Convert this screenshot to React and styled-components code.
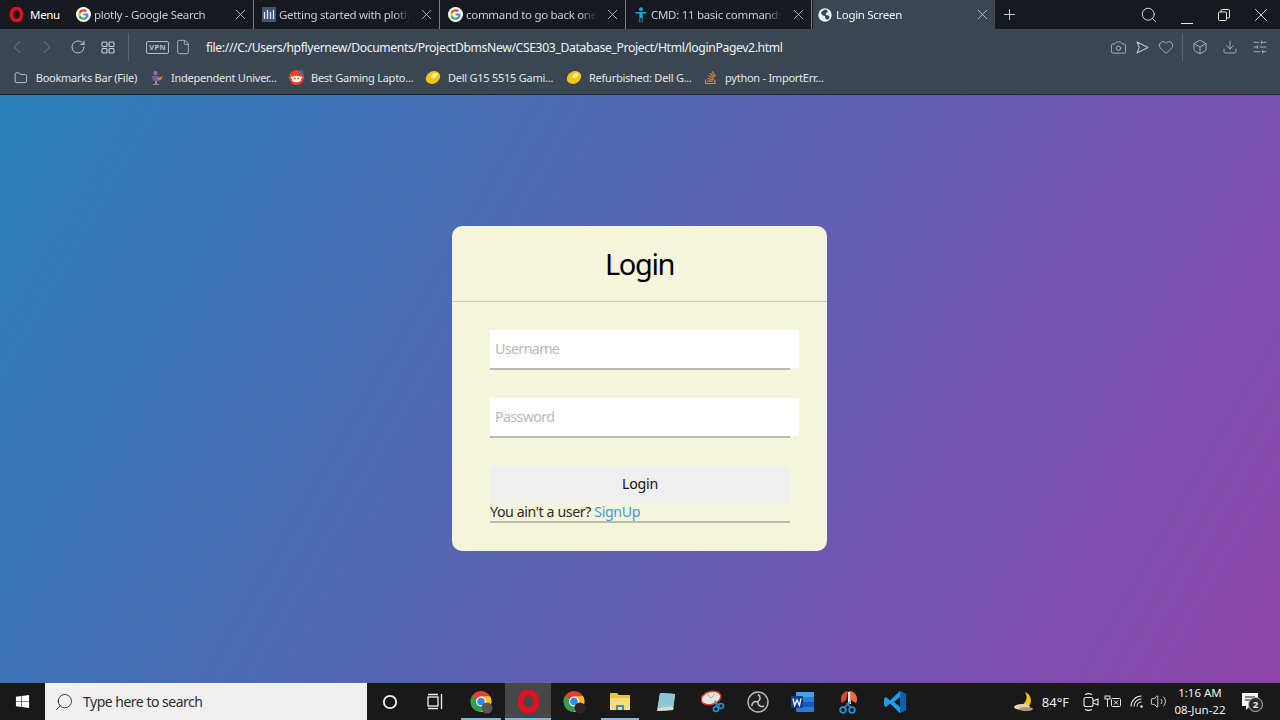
import React from 'react'
import styled, { createGlobalStyle } from 'styled-components'
import {
  ChevronLeft, ChevronRight, RotateCw, File, Folder, Camera, Heart, Box, Download,
  SlidersHorizontal, Search, X, Plus, Volume2,
} from 'lucide-react'
import { FaStackOverflow, FaWindows } from 'react-icons/fa'

const uiFont = `"Noto Sans", "Open Sans", "Liberation Sans", sans-serif`

const GlobalStyle = createGlobalStyle`
  html, body { margin: 0; padding: 0; height: 100%; overflow: hidden; }
  body { font-family: ${uiFont}; }
  #root { height: 100%; }
  * { box-sizing: border-box; }
`

const Screen = styled.div`
  width: 1280px;
  height: 720px;
  display: flex;
  flex-direction: column;
`

/* browser chrome */
const TabStrip = styled.div`
  height: 29px;
  background: #16191e;
  display: flex;
  align-items: stretch;
  color: #c8cdd2;
  font-size: 11.5px;
  letter-spacing: -0.3px;
`
const MenuButton = styled.div`
  width: 68px;
  display: flex;
  align-items: center;
  gap: 6px;
  padding-left: 9px;
  color: #fff;
`
const Tab = styled.div`
  width: ${p => (p.$active ? '182px' : '186px')};
  margin-left: ${p => (p.$active ? '1px' : '0')};
  display: flex;
  align-items: center;
  padding: 0 4px 0 ${p => (p.$active ? '5px' : '8px')};
  gap: ${p => (p.$active ? '4px' : '3px')};
  background: ${p => (p.$active ? '#3b4653' : 'transparent')};
  color: ${p => (p.$active ? '#f2f4f6' : '#c8cdd2')};
  border-right: ${p => (p.$sep ? '1px solid #7c8187' : '0')};
`
const TabTitle = styled.span`
  flex: 1;
  min-width: 0;
  white-space: nowrap;
  overflow: hidden;
  mask-image: linear-gradient(to right, #000 88%, transparent 100%);
`
const TabClose = styled(X)`
  flex: none;
  margin-left: 5px;
  color: #c4c8cc;
`
const StripRight = styled.div`
  flex: 1;
  display: flex;
  align-items: center;
  padding-left: 6px;
  color: #e6e8ea;
`
const WindowButtons = styled.div`
  margin-left: auto;
  display: flex;
  align-items: center;
`
const WinButton = styled.div`
  width: 37.4px;
  display: flex;
  justify-content: center;
`
const ToolBar = styled.div`
  height: 33px;
  background: #3b4653;
  display: flex;
  align-items: center;
  color: #c3c8cd;
  padding: 3px 0 0 2px;
`
const NavButton = styled.div`
  width: ${p => p.$w || 30}px;
  display: flex;
  justify-content: center;
  color: ${p => (p.$off ? '#6f7984' : '#c9ced3')};
`
const Divider = styled.div`
  width: 1px;
  height: 28px;
  background: #596470;
  margin: ${p => p.$m || '0'};
`
const VpnBadge = styled.div`
  width: 23px;
  height: 13px;
  border: 1px solid #b6bcc2;
  border-radius: 2px;
  font-size: 7.5px;
  font-weight: 600;
  line-height: 11px;
  text-align: center;
  letter-spacing: 0.4px;
  color: #c3c8cd;
  margin: 0 6px 0 0;
`
const Url = styled.div`
  color: #f1f3f5;
  font-size: 12.2px;
  letter-spacing: -0.37px;
  margin-left: 15px;
  white-space: nowrap;
`
const ToolRight = styled.div`
  margin-left: auto;
  display: flex;
  align-items: center;
  padding-right: 5px;
  color: #bcc1c7;
`
const ToolCell = styled.div`
  width: ${p => p.$w || 24}px;
  display: flex;
  justify-content: center;
`
const BookmarkBar = styled.div`
  height: 33px;
  background: #3b4653;
  border-bottom: 1px solid #20262d;
  display: flex;
  align-items: center;
  padding: 0 0 1px 14px;
  color: #e3e6e9;
  font-size: 11px;
  letter-spacing: -0.25px;
`
const Bookmark = styled.div`
  display: flex;
  align-items: center;
  gap: ${p => p.$gap || 7}px;
  margin-right: 12px;
  white-space: nowrap;
  width: ${p => p.$w}px;
`

/* page */
const Page = styled.main`
  flex: 1;
  background: linear-gradient(120deg, #2980b9, #8e44ad);
  display: flex;
  align-items: center;
  justify-content: center;
  padding-right: 1px;
`
const Card = styled.form`
  width: 375px;
  height: 325px;
  margin-top: -1px;
  background: #f5f5dc;
  border-radius: 10px;
`
const Title = styled.h1`
  margin: 0;
  height: 76px;
  border-bottom: 1px solid #c9c9bb;
  text-align: center;
  font-size: 29px;
  letter-spacing: -1.4px;
  font-weight: 400;
  line-height: 76px;
  color: #000;
`
const Fields = styled.div`
  padding: 28px 38px 0;
  display: flex;
  flex-direction: column;
`
const Field = styled.div`
  height: 40px;
  margin-bottom: 28px;
  border-bottom: 2px solid #b9b9b2;
  width: 300px;
`
const Input = styled.input`
  display: block;
  width: 309px;
  height: 38px;
  border: 0;
  outline: 0;
  background: #fff;
  padding: 0 5px 2px;
  font: 14.2px ${uiFont};
  letter-spacing: -0.6px;
  &::placeholder { color: #b8b8b8; opacity: 1; }
`
const LoginButton = styled.button`
  width: 300px;
  height: 37px;
  border: 0;
  background: #efefef;
  font: 14.2px ${uiFont};
  letter-spacing: -0.2px;
  color: #111;
  padding: 0 0 3px;
`
const SignupLine = styled.div`
  width: 300px;
  height: 20px;
  border-bottom: 2px solid #b9b9b2;
  font-size: 14.2px;
  letter-spacing: -0.4px;
  line-height: 17px;
  color: #2b2b2b;
  white-space: nowrap;
`
const SignupLink = styled.a`
  color: #3f9ad6;
`

/* windows taskbar */
const TaskBar = styled.div`
  height: 37px;
  background: #191919;
  display: flex;
  align-items: center;
  color: #fff;
`
const StartButton = styled.div`
  width: 45px;
  display: flex;
  justify-content: center;
`
const SearchBox = styled.div`
  width: 322px;
  height: 37px;
  background: #f0f0f0;
  display: flex;
  align-items: center;
  padding-left: 9px;
  gap: 9px;
  color: #2d2d2d;
  font-size: 14px;
  letter-spacing: -0.5px;
`
const TaskIcons = styled.div`
  display: flex;
  align-items: stretch;
  height: 37px;
`
const TaskIcon = styled.div`
  width: ${p => p.$w || 46}px;
  display: flex;
  align-items: center;
  justify-content: center;
  background: ${p => (p.$hot ? '#474747' : 'transparent')};
  position: relative;
  &::after {
    content: '';
    display: ${p => (p.$open ? 'block' : 'none')};
    position: absolute;
    left: ${p => (p.$hot ? '0' : '4px')};
    right: ${p => (p.$hot ? '0' : '4px')};
    bottom: 0;
    height: 2px;
    background: #76b9ed;
  }
`
const Tray = styled.div`
  margin-left: auto;
  display: flex;
  align-items: center;
  height: 37px;
  font-size: 12px;
  color: #f0f0f0;
`
const Temp = styled.span`
  font-size: 13px;
  margin: 0 12px 0 7px;
`
const TrayIcon = styled.div`
  width: ${p => p.$w || 22}px;
  display: flex;
  justify-content: center;
`
const Clock = styled.div`
  width: 60px;
  margin-left: 1px;
  text-align: center;
  font-size: 11.5px;
  line-height: 16.500px;
`
const Notify = styled.div`
  width: 22px;
  margin: 0 17px 0 11px;
  position: relative;
  display: flex;
`
const NotifyCount = styled.span`
  position: absolute;
  left: 7px;
  top: 5px;
  width: 15px;
  height: 15px;
  border-radius: 50%;
  background: #2b2b2b;
  border: 1px solid #bbb;
  font-size: 9.5px;
  font-weight: 700;
  line-height: 13px;
  text-align: center;
`

/* drawn icons */
const GoogleIcon = () => (
  <svg width="15" height="15" viewBox="0 0 24 24" style={{ flex: 'none' }}>
    <circle cx="12" cy="12" r="12" fill="#fff" />
    <path fill="#4285F4" d="M20 12.200c0-.6-.1-1.100-.2-1.700H12v3.200h4.500c-.2 1-.8 1.900-1.700 2.500v2.100h2.700c1.600-1.500 2.500-3.600 2.500-6.100z" />
    <path fill="#34A853" d="M12 20.300c2.300 0 4.100-.8 5.500-2l-2.700-2.100c-.8.500-1.700.8-2.800.8-2.200 0-4-1.500-4.700-3.400H4.500v2.200c1.400 2.700 4.200 4.500 7.500 4.500z" />
    <path fill="#FBBC05" d="M7.300 13.600c-.2-.5-.3-1-.3-1.600s.1-1.100.3-1.600V8.200H4.500C3.900 9.300 3.600 10.600 3.600 12s.3 2.700.9 3.800l2.800-2.200z" />
    <path fill="#EA4335" d="M12 7c1.200 0 2.300.4 3.200 1.200l2.400-2.400C16.100 4.500 14.200 3.700 12 3.700c-3.300 0-6.100 1.800-7.500 4.500l2.800 2.200C8 8.500 9.800 7 12 7z" />
  </svg>
)
const OperaIcon = ({ size = 15 }) => (
  <svg width={size} height={size} viewBox="0 0 24 24" style={{ flex: 'none' }}>
    <ellipse cx="12" cy="12" rx="8.200" ry="9.800" fill="none" stroke="#e5101f" strokeWidth="6" />
  </svg>
)
const StatsIcon = () => (
  <svg width="14" height="15" viewBox="0 0 14 15" style={{ flex: 'none' }}>
    <rect width="14" height="15" fill="#3f5678" />
    <path d="M2.500 5v7M5.500 3v9M8.500 5v7M11.500 3v9" stroke="#e6ebf2" strokeWidth="1.300" />
  </svg>
)
const PersonIcon = () => (
  <svg width="14" height="16" viewBox="0 0 14 16" style={{ flex: 'none' }}>
    <circle cx="7" cy="2.200" r="2" fill="#22a0e0" />
    <path d="M1.500 5h11v1.600H8.600V15.500H7.700V11H6.300v4.500H5.400V6.600H1.500z" fill="#22a0e0" />
  </svg>
)
const GlobeIcon = () => (
  <svg width="14" height="14" viewBox="0 0 24 24" style={{ flex: 'none' }}>
    <circle cx="12" cy="12" r="11.500" fill="#eef1f3" />
    <path fill="#3b4653" d="M10 3l5 0 2 3-3 3-1 3 5 1 2 3-3 4-4-1-1-5-5-2-2-4 3-3z" />
  </svg>
)
const GridIcon = () => (
  <svg width="14" height="13" viewBox="0 0 14 13" fill="none" stroke="currentColor" strokeWidth="1.100">
    <rect x="1" y="1" width="5" height="4.500" rx="1" />
    <rect x="8" y="1" width="5" height="4.500" rx="1" />
    <rect x="1" y="7.500" width="5" height="4.500" rx="1" />
    <rect x="8" y="7.500" width="5" height="4.500" rx="1" />
  </svg>
)
const SendIcon = () => (
  <svg width="15" height="15" viewBox="0 0 15 15" fill="none" stroke="currentColor" strokeWidth="1.100">
    <path d="M2 2l11 5.500L2 13l2.200-5.500z" strokeLinejoin="round" />
  </svg>
)
const RestoreIcon = () => (
  <svg width="12" height="12" viewBox="0 0 12 12" fill="none" stroke="#e6e8ea" strokeWidth="1">
    <rect x=".5" y="3" width="8" height="8.500" rx="1" />
    <path d="M3 3V1.500a1 1 0 0 1 1-1h6.500a1 1 0 0 1 1 1V8a1 1 0 0 1-1 1H9" />
  </svg>
)
const MinimizeIcon = () => (
  <svg width="12" height="12" viewBox="0 0 12 12" style={{ marginTop: 7 }}><path d="M0 11.500h12" stroke="#e6e8ea" /></svg>
)
const UniversityIcon = () => (
  <svg width="15" height="16" viewBox="0 0 15 16" style={{ flex: 'none' }}>
    <circle cx="6.500" cy="3" r="2.200" fill="#8b6fa8" />
    <path d="M3 6h7l1 5H4z" fill="#7a5a9a" />
    <path d="M7 9l7-3-2 4z" fill="#e08a2e" />
    <path d="M6 11h2v3h2v1H4v-1h2z" fill="#8f8f99" />
  </svg>
)
const RedditIcon = () => (
  <svg width="15" height="15" viewBox="0 0 15 15" style={{ flex: 'none' }}>
    <circle cx="7.500" cy="7.500" r="7.500" fill="#f0451a" />
    <ellipse cx="7.500" cy="9" rx="4.600" ry="3.200" fill="#fff" />
    <circle cx="2.900" cy="7.600" r="1.200" fill="#fff" />
    <circle cx="12.100" cy="7.600" r="1.200" fill="#fff" />
    <circle cx="5.800" cy="8.500" r=".9" fill="#f0451a" />
    <circle cx="9.200" cy="8.500" r=".9" fill="#f0451a" />
    <circle cx="12.600" cy="2" r="2" fill="#1f78c8" />
  </svg>
)
const DellIcon = () => (
  <svg width="16" height="15" viewBox="0 0 16 15" style={{ flex: 'none' }}>
    <ellipse cx="8" cy="7.500" rx="7.500" ry="6" transform="rotate(-30 8 7.500)" fill="#f6c416" />
    <ellipse cx="9.500" cy="5.500" rx="3.500" ry="2" transform="rotate(-30 9.500 5.500)" fill="#fdf0a0" />
  </svg>
)
const ChromeIcon = ({ badge }) => (
  <svg width="24" height="24" viewBox="0 0 24 24">
    <circle cx="12" cy="11.500" r="10.500" fill="#e5412f" />
    <path d="M12 11.500L2.900 6.300A10.500 10.500 0 0 0 12 22l5-9z" fill="#2fa04b" />
    <path d="M12 6.300h9.100A10.500 10.500 0 0 1 12 22l5-10.500z" fill="#f8c520" />
    <circle cx="12" cy="11.500" r="5" fill="#fff" />
    <circle cx="12" cy="11.500" r="3.800" fill="#3f83ee" />
    <circle cx="18" cy="18" r="5.500" fill={badge} />
  </svg>
)
const FolderApp = () => (
  <svg width="22" height="19" viewBox="0 0 22 19">
    <path d="M1 1h7l2 2h11v15H1z" fill="#f0c040" />
    <path d="M1 6h20v12H1z" fill="#f9dd7a" />
    <path d="M7 18v-4a1 1 0 0 1 1-1h6a1 1 0 0 1 1 1v4h-2v-3H9v3z" fill="#2d8fd0" />
  </svg>
)
const NotesApp = () => (
  <svg width="22" height="22" viewBox="0 0 22 22">
    <path d="M5 2l15 1-2 16-16 1z" fill="#bfe3ea" />
    <path d="M5 2l15 1-1.500 12L3 17z" fill="#8cc6d6" />
    <path d="M2 20l16-1 1-2-15 1z" fill="#e4d9b8" />
  </svg>
)
const SnipApp = () => (
  <svg width="24" height="24" viewBox="0 0 24 24">
    <ellipse cx="10" cy="8" rx="10" ry="6.500" transform="rotate(-15 10 8)" fill="#e9e3e0" stroke="#cf3b33" strokeWidth="1.500" />
    <path d="M10 8l4-4M10 8L6 4" stroke="#99a" strokeWidth=".8" />
    <circle cx="15" cy="19" r="2.500" fill="none" stroke="#2a8fd0" strokeWidth="1.600" />
    <circle cx="20" cy="16" r="2.500" fill="none" stroke="#2a8fd0" strokeWidth="1.600" />
    <path d="M16 17l-2-6M18.500 16l-5-5" stroke="#2a8fd0" strokeWidth="1.300" />
  </svg>
)
const ObsApp = () => (
  <svg width="22" height="22" viewBox="0 0 22 22">
    <circle cx="11" cy="11" r="10" fill="#222" stroke="#bcbcbc" strokeWidth="1.400" />
    <path d="M11 3.500a4 4 0 0 1 0 7M5 15a4 4 0 0 1 6-4M17 15a4 4 0 0 1-6-4" fill="none" stroke="#c8c8c8" strokeWidth="1.500" />
  </svg>
)
const WordApp = () => (
  <svg width="24" height="22" viewBox="0 0 24 22">
    <rect x="5" y="1" width="18" height="20" rx="1" fill="#2b7cd3" />
    <rect x="5" y="1" width="18" height="5" fill="#41a5ee" />
    <rect x="5" y="11" width="18" height="5" fill="#185abd" />
    <rect x="0" y="5" width="12" height="12" rx="1" fill="#103f91" />
    <path d="M2 7.500l1.600 7 2.400-5.500 2.400 5.500 1.600-7" fill="none" stroke="#fff" strokeWidth="1.300" />
  </svg>
)
const CutApp = () => (
  <svg width="20" height="24" viewBox="0 0 20 24">
    <path d="M9 1a8 8 0 0 0-6 12l4-3z" fill="#d8452f" />
    <path d="M10 1a8 8 0 0 1 7 12l-5-3z" fill="#f06a3a" />
    <path d="M9 2l2 0 1 12h-3z" fill="#e8e8e8" />
    <circle cx="4" cy="20" r="2.800" fill="none" stroke="#2a8fd0" strokeWidth="1.800" />
    <circle cx="13" cy="20" r="2.800" fill="none" stroke="#2a8fd0" strokeWidth="1.800" />
    <path d="M5 18l6-6M12 18l-4-5" stroke="#2a8fd0" strokeWidth="1.600" />
  </svg>
)
const VsCodeApp = () => (
  <svg width="24" height="24" viewBox="0 0 24 24">
    <path d="M17 1l6 3v16l-6 3-10-9.500L3 17l-2-1.500v-7L3 7l4 3.500z" fill="#1f9cf0" />
    <path d="M17 1l6 3v16l-6 3z" fill="#0065a9" />
    <path d="M17 7l-6 5 6 5z" fill="#191919" />
  </svg>
)
const TaskViewIcon = () => (
  <svg width="17" height="17" viewBox="0 0 17 17" fill="none" stroke="#f0f0f0" strokeWidth="1.300">
    <rect x="1" y="4" width="10" height="9" />
    <path d="M1 1.500h10M1 15.500h10M14.500 1v15" />
  </svg>
)
const WeatherIcon = () => (
  <svg width="22" height="22" viewBox="0 0 22 22">
    <path d="M12 1a9 9 0 0 1 4 14H4a9 9 0 0 0 8-14z" fill="#f5c518" />
    <ellipse cx="9" cy="16" rx="8" ry="3" fill="#e6d4b0" />
    <ellipse cx="13" cy="18" rx="7" ry="2" fill="#a89878" />
  </svg>
)
const MeetIcon = () => (
  <svg width="18" height="20" viewBox="0 0 18 20" fill="none" stroke="#e8e8e8" strokeWidth="1.100">
    <rect x="2" y="5.500" width="9" height="9" rx="2" />
    <path d="M11 9l5-2v6l-5-2M3 2.500a8 8 0 0 1 7 0M3 17.500a8 8 0 0 0 7 0" />
  </svg>
)
const NetworkIcon = () => (
  <svg width="18" height="14" viewBox="0 0 18 14" fill="none" stroke="#e8e8e8" strokeWidth="1">
    <rect x="1" y="1" width="5" height="3" />
    <path d="M3.500 4v8" />
    <rect x="7.500" y="3.500" width="9" height="8" rx="1" />
    <path d="M10 5.500l4 4M14 5.500l-4 4" />
  </svg>
)
const WifiIcon = () => (
  <svg width="15" height="15" viewBox="0 0 15 15" fill="none" stroke="#e8e8e8" strokeWidth="1.100">
    <circle cx="12.500" cy="12.500" r="1.200" fill="#e8e8e8" stroke="none" />
    <path d="M8 12.500A4.500 4.500 0 0 1 12.500 8M5 12.500A7.500 7.500 0 0 1 12.500 5M2 12.500A10.500 10.500 0 0 1 12.500 2" />
  </svg>
)
const NotifyIcon = () => (
  <svg width="22" height="20" viewBox="0 0 22 20" fill="#f4f4f4">
    <path d="M1 1h16v13H9l-4 4v-4H1z" />
    <path d="M4 5h10M4 8h10" stroke="#191919" strokeWidth="1" />
  </svg>
)

const tabs = [
  { icon: <GoogleIcon />, title: 'plotly - Google Search' },
  { icon: <StatsIcon />, title: 'Getting started with plotly in' },
  { icon: <GoogleIcon />, title: 'command to go back one f' },
  { icon: <PersonIcon />, title: 'CMD: 11 basic commands y' },
]

const bookmarks = [
  { icon: <Folder size={14} strokeWidth={1.3} />, title: 'Bookmarks Bar (File)', w: 123, gap: 8 },
  { icon: <UniversityIcon />, title: 'Independent Univer...', w: 128 },
  { icon: <RedditIcon />, title: 'Best Gaming Lapto...', w: 124 },
  { icon: <DellIcon />, title: 'Dell G15 5515 Gami...', w: 129 },
  { icon: <DellIcon />, title: 'Refurbished: Dell G...', w: 125 },
  { icon: <FaStackOverflow size={15} color="#d98a3d" style={{ flex: 'none' }} />, title: 'python - ImportErr...', w: 126 },
]

const App = () => {
  return (
    <Screen>
      <GlobalStyle />
      <TabStrip>
        <MenuButton><OperaIcon /> Menu</MenuButton>
        {tabs.map(t => (
          <Tab key={t.title} $sep>
            {t.icon}
            <TabTitle>{t.title}</TabTitle>
            <TabClose size={17} strokeWidth={1.2} />
          </Tab>
        ))}
        <Tab $active>
          <GlobeIcon />
          <TabTitle>Login Screen</TabTitle>
          <TabClose size={17} strokeWidth={1.2} />
        </Tab>
        <StripRight>
          <Plus size={17} strokeWidth={1.2} />
          <WindowButtons>
            <WinButton><Search size={18} strokeWidth={1.2} /></WinButton>
            <WinButton><MinimizeIcon /></WinButton>
            <WinButton><RestoreIcon /></WinButton>
            <WinButton><X size={22} strokeWidth={1} /></WinButton>
          </WindowButtons>
        </StripRight>
      </TabStrip>
      <ToolBar>
        <NavButton $off $w={30}><ChevronLeft size={22} strokeWidth={1.1} /></NavButton>
        <NavButton $off $w={30}><ChevronRight size={22} strokeWidth={1.1} /></NavButton>
        <NavButton $w={31}><RotateCw size={16} strokeWidth={1.4} /></NavButton>
        <NavButton $w={30}><GridIcon /></NavButton>
        <Divider $m="0 17px 0 5px" />
        <VpnBadge>VPN</VpnBadge>
        <File size={16} strokeWidth={1.2} />
        <Url>file:///C:/Users/hpflyernew/Documents/ProjectDbmsNew/CSE303_Database_Project/Html/loginPagev2.html</Url>
        <ToolRight>
          <ToolCell><Camera size={17} strokeWidth={1.2} /></ToolCell>
          <ToolCell><SendIcon /></ToolCell>
          <ToolCell><Heart size={16} strokeWidth={1.2} /></ToolCell>
          <Divider $m="0 2px 0 4px" />
          <ToolCell $w={30}><Box size={16} strokeWidth={1.2} /></ToolCell>
          <ToolCell $w={30}><Download size={16} strokeWidth={1.2} /></ToolCell>
          <ToolCell $w={30}><SlidersHorizontal size={16} strokeWidth={1.2} /></ToolCell>
        </ToolRight>
      </ToolBar>
      <BookmarkBar>
        {bookmarks.map(b => (
          <Bookmark key={b.title} $w={b.w} $gap={b.gap}>{b.icon}{b.title}</Bookmark>
        ))}
      </BookmarkBar>
      <Page>
        <Card onSubmit={e => e.preventDefault()}>
          <Title>Login</Title>
          <Fields>
            <Field><Input placeholder="Username" /></Field>
            <Field><Input type="password" placeholder="Password" /></Field>
            <LoginButton>Login</LoginButton>
            <SignupLine>You ain't a user? <SignupLink>SignUp</SignupLink></SignupLine>
          </Fields>
        </Card>
      </Page>
      <TaskBar>
        <StartButton><FaWindows size={15} /></StartButton>
        <SearchBox>
          <Search size={20} strokeWidth={1.1} style={{ transform: 'scaleX(-1)' }} />
          Type here to search
        </SearchBox>
        <TaskIcons>
          <TaskIcon $w={46}>
            <svg width="16" height="16" viewBox="0 0 16 16"><circle cx="8" cy="8" r="6.200" fill="none" stroke="#f0f0f0" strokeWidth="1.800" /></svg>
          </TaskIcon>
          <TaskIcon $w={44}><TaskViewIcon /></TaskIcon>
          <TaskIcon $w={48} $open><ChromeIcon badge="#5b5550" /></TaskIcon>
          <TaskIcon $w={46} $hot $open><OperaIcon size={23} /></TaskIcon>
          <TaskIcon $w={46}><ChromeIcon badge="#33202a" /></TaskIcon>
          <TaskIcon $w={46} $open><FolderApp /></TaskIcon>
          <TaskIcon $w={46}><NotesApp /></TaskIcon>
          <TaskIcon $w={47}><SnipApp /></TaskIcon>
          <TaskIcon $w={43}><ObsApp /></TaskIcon>
          <TaskIcon $w={47}><WordApp /></TaskIcon>
          <TaskIcon $w={46}><CutApp /></TaskIcon>
          <TaskIcon $w={46}><VsCodeApp /></TaskIcon>
        </TaskIcons>
        <Tray>
          <WeatherIcon />
          <Temp>84°F</Temp>
          <TrayIcon $w={20}><MeetIcon /></TrayIcon>
          <TrayIcon $w={24}><NetworkIcon /></TrayIcon>
          <TrayIcon $w={23}><WifiIcon /></TrayIcon>
          <TrayIcon $w={21}><Volume2 size={17} strokeWidth={1.2} /></TrayIcon>
          <Clock>1:16 AM<br />08-Jun-22</Clock>
          <Notify><NotifyIcon /><NotifyCount>2</NotifyCount></Notify>
        </Tray>
      </TaskBar>
    </Screen>
  )
}

export default App
